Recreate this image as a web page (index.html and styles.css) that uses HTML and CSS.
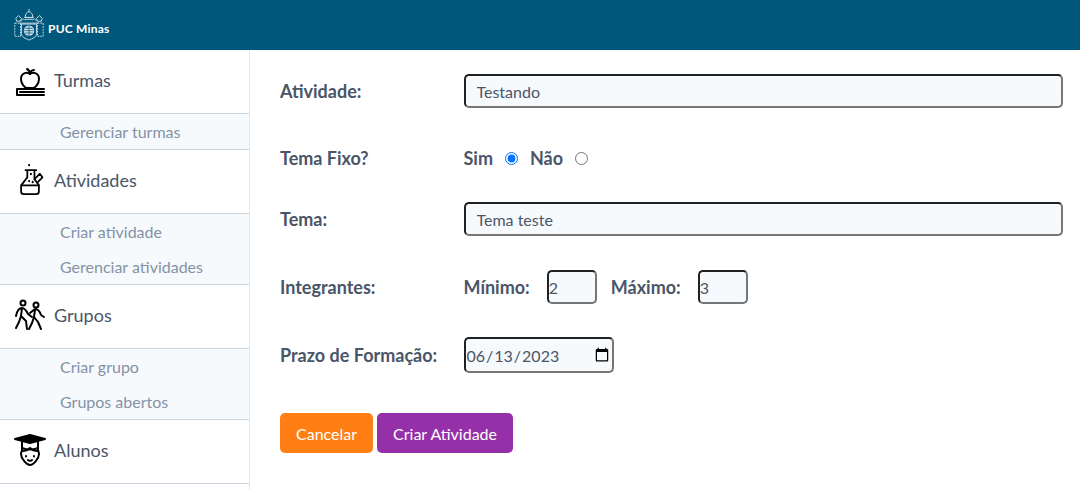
FILE: index.html
```html
<!DOCTYPE html>
<html lang="pt-BR">
<head>
<meta charset="utf-8">
<title>Criar Atividade</title>
<link rel="stylesheet" href="styles.css">
</head>
<body>
<header class="topbar">
  <div class="logo">
    <svg class="crest" viewBox="0 0 36 36" fill="none" stroke="#cfe0e8" stroke-width="1">
      <path d="M18 1v3M14 10c0-4 2-6 4-6s4 2 4 6zM13 10h10M14 12h8"/>
      <path d="M10 14c1-3 3-3 4-1M26 14c-1-3-3-3-4-1M8 16h20"/>
      <path d="M4 11l3-3 3 3-1 3H5zM32 11l-3-3-3 3 1 3h4z"/>
      <path d="M3 16h6v14H3zM27 16h6v14h-6z" stroke-dasharray="2 1"/>
      <path d="M10 17h16v10c0 4-4 5-8 7-4-2-8-3-8-7z"/>
      <circle cx="18" cy="24" r="5.500" fill="#cfe0e8" stroke="none"/>
      <path d="M18 18.500v11M14 21.500h8M13 24h10M14 26.500h8" stroke="#00577c" stroke-width=".8"/>
    </svg>
    <span class="logo-text">PUC Minas</span>
  </div>
</header>
<div class="layout">
  <nav class="sidebar">
    <a class="nav-item" href="#">
      <svg class="nav-icon" viewBox="0 0 32 32" fill="none" stroke="#000" stroke-width="2" stroke-linecap="round" stroke-linejoin="round">
        <path d="M16 10c-2-2-9-2-9 5 0 5 4 9 6 9h6c2 0 6-4 6-9 0-7-7-7-9-5z"/>
        <path d="M16 10c0-3-1-4-3-5M16 9c1-2 3-3 4-3"/>
        <path d="M7 25H3v6h27M30 25H7M6 28h24" />
      </svg>
      <span>Turmas</span>
    </a>
    <div class="subnav"><a href="#">Gerenciar turmas</a></div>
    <a class="nav-item" href="#">
      <svg class="nav-icon" viewBox="0 0 32 36" fill="none" stroke="#000" stroke-width="2" stroke-linecap="round" stroke-linejoin="round">
        <path d="M11 7h12M13 7v8L6 24v7c0 2 1 3 3 3h14c2 0 3-1 3-3v-7l-5-7V7"/>
        <path d="M7 24h19M21 17l6-6 3 4-5 5"/>
        <path d="M15 1v.5M17 11v.5M15 19v.5M19 20v.5" stroke-width="2.200"/>
      </svg>
      <span>Atividades</span>
    </a>
    <div class="subnav"><a href="#">Criar atividade</a><a href="#">Gerenciar atividades</a></div>
    <a class="nav-item" href="#">
      <svg class="nav-icon" viewBox="0 0 32 32" fill="none" stroke="#000" stroke-width="2" stroke-linecap="round" stroke-linejoin="round">
        <circle cx="9" cy="4" r="2.500"/><circle cx="22" cy="6" r="2.500"/>
        <path d="M2 17c1-5 3-8 6-8s5 4 6 6l4 3M8 9l-1 8 5 5 1 8M7 17l-2 6-3 6"/>
        <path d="M16 14l5-4c3 0 5 3 6 6l3 2M21 11l-1 7 4 5 3 7M20 18l-2 6-3 6"/>
      </svg>
      <span>Grupos</span>
    </a>
    <div class="subnav"><a href="#">Criar grupo</a><a href="#">Grupos abertos</a></div>
    <a class="nav-item" href="#">
      <svg class="nav-icon" viewBox="0 0 32 32" fill="none" stroke="#000" stroke-width="2" stroke-linecap="round" stroke-linejoin="round">
        <path d="M1 5l15-4 15 4-15 4z" fill="#000"/>
        <path d="M8 8v8c0 1-1 2-1 4 0 5 6 11 9 11s9-6 9-11c0-2-1-3-1-4V8"/>
        <path d="M8 14c5 2 11 2 16 0M8 17c3 0 6-1 8-3 2 2 5 3 8 3"/>
        <path d="M12 22v.5M20 22v.5M14 26c1 1 3 1 4 0"/>
      </svg>
      <span>Alunos</span>
    </a>
  </nav>
  <main class="content">
    <form class="form">
      <div class="row">
        <label class="label">Atividade:</label>
        <input class="field field-wide" type="text" value="Testando">
      </div>
      <div class="row row-radio">
        <span class="label">Tema Fixo?</span>
        <div class="controls">
          <label class="label">Sim</label>
          <input class="radio radio-sim" type="radio" name="fixo" checked>
          <label class="label">Não</label>
          <input class="radio" type="radio" name="fixo">
        </div>
      </div>
      <div class="row row-after-radio">
        <label class="label">Tema:</label>
        <input class="field field-wide" type="text" value="Tema teste">
      </div>
      <div class="row">
        <span class="label">Integrantes:</span>
        <div class="controls">
          <label class="label">Mínimo:</label>
          <input class="field field-num" type="text" value="2">
          <label class="label label-max">Máximo:</label>
          <input class="field field-num" type="text" value="3">
        </div>
      </div>
      <div class="row row-date">
        <label class="label">Prazo de Formação:</label>
        <input class="field field-date" type="date" value="2023-06-13">
      </div>
      <div class="actions">
        <button class="btn btn-cancel" type="button">Cancelar</button>
        <button class="btn btn-create" type="button">Criar Atividade</button>
      </div>
    </form>
  </main>
</div>
</body>
</html>
```
FILE: styles.css
```css
* { box-sizing: border-box; }
html, body { margin: 0; height: 100%; overflow: hidden; }
body { font-family: "Lato", "Liberation Sans", sans-serif; color: #4a5568; background: #fff; }
a { text-decoration: none; color: inherit; }

.topbar { height: 50px; background: #00577c; display: flex; align-items: center; padding-left: 12px; }
.logo { display: flex; align-items: flex-end; gap: 2px; }
.crest { width: 34px; height: 34px; display: block; }
.logo-text { color: #fff; font-family: "Lato", sans-serif; font-weight: 700; font-size: 12px; line-height: 14px; margin-bottom: 6px; letter-spacing: .2px; }

.layout { display: flex; height: 440px; }
.sidebar { width: 250px; flex: none; border-right: 1px solid #e2e8f0; }
.nav-item { display: flex; align-items: center; height: 64px; padding: 0 0 4px 14px; border-bottom: 1px solid #cbd5e0; font-size: 18px; background: #fff; }
.nav-icon { width: 32px; height: 32px; margin-right: 8px; flex: none; }
.subnav { display: flex; flex-direction: column; background: #f7fafc; border-bottom: 1px solid #cbd5e0; padding-left: 60px; }
.subnav a { height: 35px; line-height: 36px; font-size: 16px; color: #8492a6; }
.subnav a:last-child { height: 35px; line-height: 36px; }

.content { flex: 1; padding: 24px 17px 0 30px; }
.row { display: flex; align-items: center; margin-bottom: 34px; min-height: 34px; }
.label { font-size: 18px; font-weight: 700; color: #4a5568; }
.row > .label { width: 183.500px; flex: none; }
.row-radio { min-height: 24px; height: 24px; margin-top: 38px; margin-bottom: 32px; }
.row-date { margin-bottom: 40px; margin-top: -1px; }
.controls { display: flex; align-items: center; }

.field { background: #f7fafc; border: 2px inset #767676; border-radius: 5px; font-family: "Lato", sans-serif; font-size: 16px; color: #4a5568; height: 34px; padding: 0; outline: none; }
.field-wide { flex: 1; padding: 0 11px; }
.field-num { width: 50px; margin-left: 17px; }
.label-max { margin-left: 14px; }
.field-date { width: 150px; height: 36px; }
.radio { margin: 0 12px 0 12px; width: 13px; height: 13px; }
.radio-sim { margin-right: 12px; }

.actions { display: flex; gap: 4px; }
.btn { height: 40px; padding: 0 16px; border: 0; border-radius: 5px; color: #fff; font-family: "Lato", sans-serif; font-size: 16px; }
.btn-cancel { background: #ff7f14; }
.btn-create { background: #9530a8; }
```
